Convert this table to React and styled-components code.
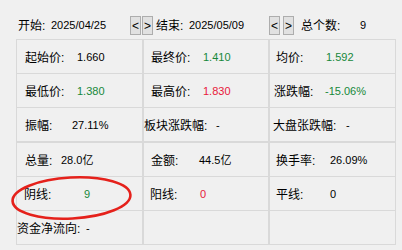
import styled, { createGlobalStyle } from "styled-components";

const GlobalStyle = createGlobalStyle`
  body {
    margin: 0;
    background: #f0f0f0;
  }
`;

const tones = {
  normal: "#000000",
  up: "#e8173a",
  down: "#16883a",
};

const Page = styled.div`
  position: relative;
  width: 402px;
  height: 250px;
  box-sizing: border-box;
  padding-top: 16px;
  background: #f0f0f0;
  font-family: "Liberation Sans", "Noto Sans CJK SC", sans-serif;
  font-size: 12px;
  color: #000;
  line-height: 1;
`;

const TopBar = styled.div`
  display: flex;
  align-items: center;
  height: 19px;
  padding-left: 18px;
  margin-bottom: 4px;
`;

const RangeField = styled.div`
  width: ${(p) => p.w}px;
  display: flex;
  align-items: center;
  white-space: nowrap;
`;

const StepGroup = styled.div`
  display: flex;
  gap: ${(p) => p.gap}px;
  margin-right: ${(p) => p.after}px;
`;

const StepButton = styled.button`
  width: 11px;
  height: 19px;
  padding: 0;
  border: 1px solid #adadad;
  background: #e1e1e1;
  font-family: "Liberation Sans", sans-serif;
  font-size: 12px;
  color: #000;
  display: flex;
  align-items: center;
  justify-content: center;
`;

const Label = styled.span`
  display: inline-block;
  width: ${(p) => (p.w ? `${p.w}px` : "auto")};
  font-size: 12px;
`;

const Value = styled.span`
  font-size: 11px;
  color: ${(p) => tones[p.tone || "normal"]};
`;

const Table = styled.div`
  margin-left: 16px;
  width: 380px;
  box-sizing: border-box;
  border: 1px solid #d9d9d9;
  background: #d9d9d9;
  display: grid;
  grid-template-columns: 125px 124px 125px;
  grid-auto-rows: 33px;
  column-gap: 2px;
  row-gap: 1px;
`;

const Cell = styled.div`
  background: #f0f0f0;
  display: flex;
  align-items: center;
  padding-left: ${(p) => p.pad || 0}px;
  padding-top: 2px;
  white-space: nowrap;
  overflow: visible;
`;

const Mark = styled.svg`
  position: absolute;
  left: 8px;
  top: 172px;
  pointer-events: none;
`;

const upper = [
  [
    { label: "起始价:", pad: 8, at: 60, value: "1.660" },
    { label: "最终价:", pad: 7, at: 59, value: "1.410", tone: "down" },
    { label: "均价:", pad: 6, at: 56, value: "1.592", tone: "down" },
  ],
  [
    { label: "最低价:", pad: 8, at: 60, value: "1.380", tone: "down" },
    { label: "最高价:", pad: 7, at: 59, value: "1.830", tone: "up" },
    { label: "涨跌幅:", pad: 4, at: 55, value: "-15.06%", tone: "down" },
  ],
  [
    { label: "振幅:", pad: 8, at: 55, value: "27.11%" },
    { label: "板块涨跌幅:", pad: 0, at: 72, value: "-" },
    { label: "大盘张跌幅:", pad: 3, at: 76, value: "-" },
  ],
];

const lower = [
  [
    { label: "总量:", pad: 8, at: 44, value: "28.0亿" },
    { label: "金额:", pad: 7, at: 55, value: "44.5亿" },
    { label: "换手率:", pad: 6, at: 60, value: "26.09%" },
  ],
  [
    { label: "阴线:", pad: 7, at: 67, value: "9", tone: "down" },
    { label: "阳线:", pad: 6, at: 56, value: "0", tone: "up" },
    { label: "平线:", pad: 6, at: 60, value: "0" },
  ],
  [{ label: "资金净流向:", pad: 0, at: 69, value: "-" }, {}, {}],
];

const StatTable = ({ rows }) => (
  <Table>
    {rows.flat().map((c, i) => (
      <Cell key={i} pad={c.pad}>
        {c.label && <Label w={c.at - c.pad}>{c.label}</Label>}
        {c.label && <Value tone={c.tone}>{c.value}</Value>}
      </Cell>
    ))}
  </Table>
);

const App = () => {
  return (
    <Page>
      <GlobalStyle />
      <TopBar>
        <RangeField w={112}>
          <Label w={33}>开始:</Label>
          <Value>2025/04/25</Value>
        </RangeField>
        <StepGroup gap={1} after={3}>
          <StepButton>&lt;</StepButton>
          <StepButton>&gt;</StepButton>
        </StepGroup>
        <RangeField w={113}>
          <Label w={33}>结束:</Label>
          <Value>2025/05/09</Value>
        </RangeField>
        <StepGroup gap={3} after={7}>
          <StepButton>&lt;</StepButton>
          <StepButton>&gt;</StepButton>
        </StepGroup>
        <RangeField w={80}>
          <Label w={59}>总个数:</Label>
          <Value>9</Value>
        </RangeField>
      </TopBar>
      <StatTable rows={upper} />
      <StatTable rows={lower} />
      <Mark width="130" height="54" viewBox="0 0 130 54">
        <ellipse
          cx="63.5"
          cy="26"
          rx="59"
          ry="20.5"
          fill="none"
          stroke="#e5211b"
          strokeWidth="2.6"
          transform="rotate(-3 63.5 26)"
        />
      </Mark>
    </Page>
  );
};

export default App;
